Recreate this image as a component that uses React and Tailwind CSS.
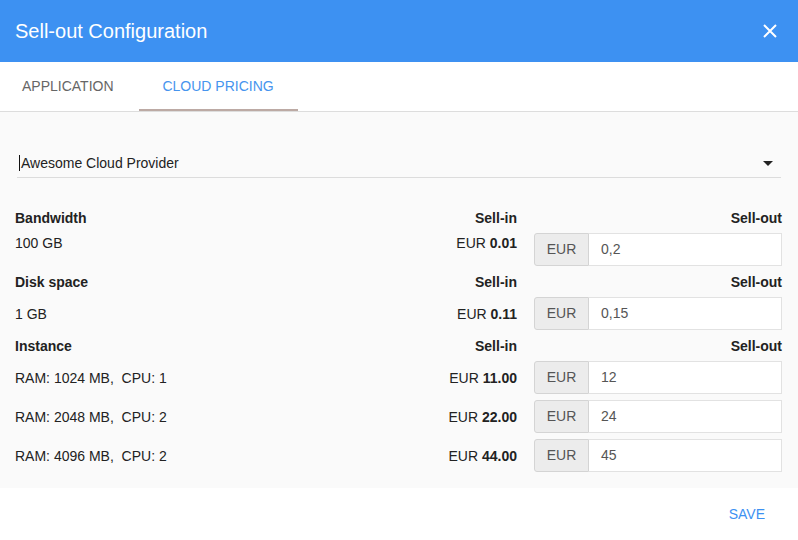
import { useState } from "react";

const sections = [
  {
    title: "Bandwidth",
    firstTop: true,
    rows: [{ label: "100 GB", sellIn: "0.01", sellOut: "0,2" }],
  },
  {
    title: "Disk space",
    rows: [{ label: "1 GB", sellIn: "0.11", sellOut: "0,15" }],
  },
  {
    title: "Instance",
    rows: [
      { label: "RAM: 1024 MB,  CPU: 1", sellIn: "11.00", sellOut: "12" },
      { label: "RAM: 2048 MB,  CPU: 2", sellIn: "22.00", sellOut: "24" },
      { label: "RAM: 4096 MB,  CPU: 2", sellIn: "44.00", sellOut: "45" },
    ],
  },
];

function PriceInput({ value }) {
  return (
    <div className="flex h-[33px] w-[248px] text-[14px]">
      <div className="flex w-[55px] items-center justify-center rounded-l-[3px] border border-[#d4d4d4] bg-[#ececec] text-[#555]">
        EUR
      </div>
      <div className="flex flex-1 items-center border border-l-0 border-[#e2e2e2] bg-white pl-[12px] text-[#555]">
        {value}
      </div>
    </div>
  );
}

export default function App() {
  const [tab, setTab] = useState("cloud");

  return (
    <div
      className="flex h-[540px] w-[798px] flex-col bg-white text-[#222]"
      style={{ fontFamily: '"Liberation Sans", Arial, sans-serif' }}
    >
      {/* Title bar */}
      <div className="flex h-[62px] shrink-0 items-center justify-between bg-[#3d91f2] pl-[15px] pr-[20px]">
        <h1 className="text-[20px] text-white">Sell-out Configuration</h1>
        <button className="flex h-[20px] w-[16px] items-center justify-center">
          <svg width="14" height="14" viewBox="0 0 14 14">
            <path d="M1 1L13 13M13 1L1 13" stroke="white" strokeWidth="2" />
          </svg>
        </button>
      </div>

      {/* Tabs */}
      <div className="flex h-[50px] shrink-0 border-b border-[#dddddd] bg-white">
        <button
          onClick={() => setTab("app")}
          className={
            "relative flex h-full items-center pl-[22px] pr-[25px] text-[14px] " +
            (tab === "app" ? "text-[#4694ee]" : "text-[#666]")
          }
        >
          APPLICATION
          {tab === "app" ? (
            <span className="absolute bottom-0 left-0 right-0 h-[2px] bg-[#bcaaa4]" />
          ) : null}
        </button>
        <button
          onClick={() => setTab("cloud")}
          className={
            "relative flex h-full w-[159px] items-center justify-center text-[14px] " +
            (tab === "cloud" ? "text-[#4694ee]" : "text-[#666]")
          }
        >
          CLOUD PRICING
          {tab === "cloud" ? (
            <span className="absolute bottom-0 left-0 right-0 h-[2px] bg-[#bcaaa4]" />
          ) : null}
        </button>
      </div>

      {/* Content */}
      <div className="bg-[#fafafa] pb-[16px] pl-[15px] pr-[16px] pt-[36px]">
        <div className="ml-[2px] mr-[1px] flex h-[30px] items-center justify-between border-b border-[#dcdcdc] pl-[2px] pr-[8px] pt-[1px]">
          <div className="flex items-center text-[14px] text-[#222]">
            <span className="mr-[1px] h-[16px] w-[1px] bg-[#111]" />
            Awesome Cloud Provider
          </div>
          <span className="h-0 w-0 border-x-[5px] border-t-[5px] border-x-transparent border-t-[#222]" />
        </div>

        <div className="mt-[29px]">
          {sections.map((section, si) => (
            <div key={section.title} className={si > 0 ? "mt-[5px]" : ""}>
              <div className="mb-[4px] flex h-[22px] items-center text-[14px] font-bold text-[#222]">
                <div className="flex-1">{section.title}</div>
                <div className="w-[120px] text-right">Sell-in</div>
                <div className="w-[265px] text-right">Sell-out</div>
              </div>
              <div className="flex flex-col gap-[6px]">
                {section.rows.map((row) => (
                  <div
                    key={row.label}
                    className={
                      "flex text-[14px] text-[#222] " +
                      (section.firstTop ? "items-start" : "items-center")
                    }
                  >
                    <div
                      className={
                        "flex-1 whitespace-pre leading-[18px] " +
                        (section.firstTop ? "pt-[1px]" : "")
                      }
                    >
                      {row.label}
                    </div>
                    <div
                      className={
                        "w-[120px] text-right leading-[18px] " +
                        (section.firstTop ? "pt-[1px]" : "")
                      }
                    >
                      EUR <span className="font-bold">{row.sellIn}</span>
                    </div>
                    <div className="ml-[17px]">
                      <PriceInput value={row.sellOut} />
                    </div>
                  </div>
                ))}
              </div>
            </div>
          ))}
        </div>
      </div>

      {/* Footer */}
      <div className="flex flex-1 items-center justify-end bg-white pr-[33px]">
        <button className="text-[14px] text-[#3d91f2]">SAVE</button>
      </div>
    </div>
  );
}
